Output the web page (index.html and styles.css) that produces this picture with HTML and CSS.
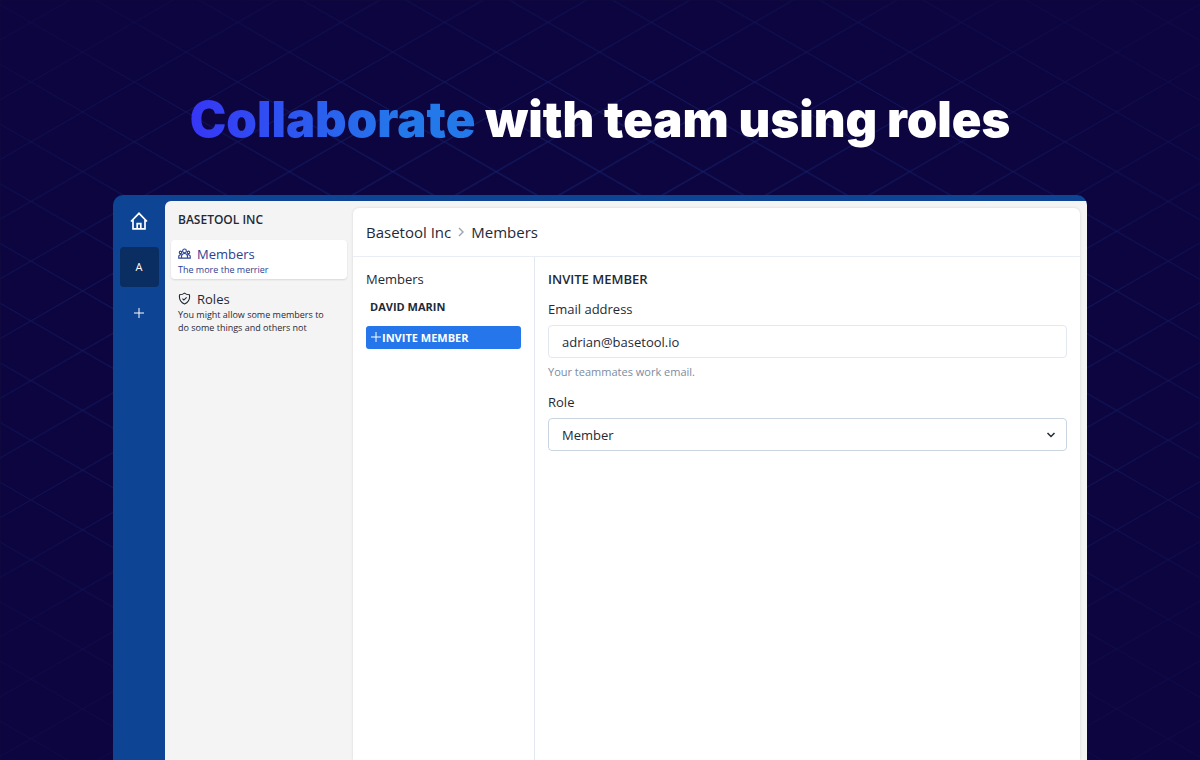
FILE: index.html
```html
<!DOCTYPE html>
<html lang="en">
  <head>
    <meta charset="utf-8">
    <meta name="viewport" content="width=device-width, initial-scale=1.0">
    <title>Basetool | Collaborate with team using roles</title>
    <link rel="stylesheet" href="styles.css">
  </head>

  <body>
    <!-- background grid, fades out from the center -->
    <svg class="grid" viewBox="0 0 1200 760" preserveAspectRatio="xMidYMid slice" aria-hidden="true">
      <defs>
        <pattern id="diamonds" x="30.9" y="22.4" width="103.4" height="59.7" patternUnits="userSpaceOnUse">
          <path d="M0 0L103.4 59.7M0 59.7L103.4 0" fill="none" stroke="#17338a" stroke-width="1"/>
        </pattern>
        <radialGradient id="fade" gradientUnits="userSpaceOnUse" cx="0" cy="0" r="1" gradientTransform="translate(600 350) scale(780 420)">
          <stop offset="0" stop-color="#fff" stop-opacity="0.8"/>
          <stop offset="0.4" stop-color="#fff" stop-opacity="0.65"/>
          <stop offset="0.7" stop-color="#fff" stop-opacity="0.4"/>
          <stop offset="1" stop-color="#fff" stop-opacity="0.16"/>
        </radialGradient>
        <mask id="glow"><rect width="1200" height="760" fill="url(#fade)"/></mask>
      </defs>
      <rect width="1200" height="760" fill="url(#diamonds)" mask="url(#glow)"/>
    </svg>

    <main class="hero">
      <h1><span>Collaborate</span> with team using roles</h1>

      <div class="app">
        <nav class="rail">
          <a href="#" class="rail-link" aria-label="Home">
            <svg class="home-icon" viewBox="0 0 20 20"><path d="M2 10.500L10 2.300l8 8.200M4 8.600v9.200h12V8.600M8.200 17.500v-4.800h3.600v4.800"/></svg>
          </a>
          <a href="#" class="rail-link current">A</a>
          <a href="#" class="rail-link" aria-label="Add organization">
            <svg class="plus-icon" viewBox="0 0 12 12"><path d="M6 1v10M1 6h10"/></svg>
          </a>
        </nav>

        <div class="workspace">
          <aside class="sidebar">
            <h2>Basetool Inc</h2>
            <a href="#" class="side-item active">
              <span class="side-title">
                <svg viewBox="0 0 14 14"><circle cx="7" cy="4.2" r="2"/><circle cx="2.7" cy="5.8" r="1.3"/><circle cx="11.3" cy="5.8" r="1.3"/><path d="M3.8 12v-1.800a3.200 3.200 0 0 1 6.400 0V12zM3.800 12H.8v-1.700a2 2 0 0 1 3.200-1.600M10.200 12h3v-1.700a2 2 0 0 0-3.200-1.600"/></svg>
                Members
              </span>
              <span class="side-text">The more the merrier</span>
            </a>
            <a href="#" class="side-item">
              <span class="side-title">
                <svg viewBox="0 0 14 14"><path d="M7 1.200c1.400 1.200 3.200 1.800 5.300 1.800.7 4.400-.9 8.100-5.300 9.900C2.600 11.100 1 7.400 1.700 3 3.800 3 5.600 2.400 7 1.200zM4.800 7.200l1.500 1.500 3-3"/></svg>
                Roles
              </span>
              <span class="side-text">You might allow some members to do some things and others not</span>
            </a>
          </aside>

          <section class="panel">
            <header class="breadcrumbs">
              <a href="#">Basetool Inc</a>
              <svg viewBox="0 0 8 10"><path d="M2 1l4 4-4 4"/></svg>
              <span>Members</span>
            </header>
            <div class="columns">
              <div class="members">
                <h3>Members</h3>
                <a href="#" class="member">David Marin</a>
                <button type="button" class="invite">
                  <svg viewBox="0 0 12 12"><path d="M6 1v10M1 6h10"/></svg>Invite member
                </button>
              </div>
              <form class="invite-form">
                <h3>Invite member</h3>
                <label for="email">Email address</label>
                <input type="email" id="email" value="adrian@basetool.io">
                <p class="help">Your teammates work email.</p>
                <label for="role">Role</label>
                <div class="select">
                  <select id="role">
                    <option>Member</option>
                  </select>
                  <svg viewBox="0 0 10 10"><path d="M1.500 3L5 6.500 8.500 3"/></svg>
                </div>
              </form>
            </div>
          </section>
        </div>
      </div>
    </main>
  </body>
</html>
```
FILE: styles.css
```css
* {
margin: 0;
padding: 0;
box-sizing: border-box;
}

body {
background: #0d053f;
color: #1f2937;
font-family: "Open Sans", "Noto Sans", sans-serif;
font-size: 13px;
line-height: 16px;
}

a {
color: inherit;
text-decoration: none;
}

svg {
fill: none;
stroke: currentColor;
flex: none;
}

.grid {
position: fixed;
inset: 0;
width: 100%;
height: 100%;
}

.hero {
position: relative;
display: flex;
flex-direction: column;
height: 100vh;
padding: 90px 113px 0;
overflow: hidden;
}

h1 {
color: #fff;
font-family: Inter, sans-serif;
font-size: 49px;
font-weight: 900;
line-height: 60px;
text-align: center;
white-space: nowrap;
}

h1 span {
background: linear-gradient(90deg, #3636f6, #2479ea 75%);
background-clip: text;
-webkit-background-clip: text;
color: transparent;
}

/* app window */
.app {
display: flex;
flex: 1;
margin-top: 45px;
padding-top: 6px;
border-radius: 10px 10px 0 0;
background: #0d4494;
overflow: hidden;
}

.rail {
display: flex;
flex-direction: column;
align-items: center;
gap: 6px;
width: 52px;
}

.rail-link {
display: flex;
align-items: center;
justify-content: center;
width: 39px;
height: 40px;
border-radius: 4px;
color: #fff;
font-size: 11px;
}

.rail-link.current {
background: #0a2d62;
}

.home-icon {
width: 20px;
height: 20px;
stroke-width: 1.7;
}

.plus-icon {
width: 12px;
height: 12px;
}

.workspace {
display: flex;
flex: 1;
min-width: 0;
border-radius: 6px 0 0 0;
background: #f4f4f4;
}

.sidebar {
width: 188px;
padding: 10px 6px;
}

.sidebar h2 {
padding: 0 7px;
font-size: 12px;
font-weight: 600;
line-height: 18px;
text-transform: uppercase;
}

.side-item {
display: block;
margin-top: 11px;
padding: 4px 12px 3px 7px;
border-radius: 4px;
}

.side-item + .side-item {
margin-top: 6px;
}

.side-item.active {
background: #fff;
color: #2c4293;
box-shadow: 0 1px 2px rgba(0, 0, 0, 0.12);
}

.side-title {
display: flex;
align-items: center;
gap: 6px;
height: 19px;
line-height: 18px;
}

.side-title svg {
width: 13px;
height: 13px;
stroke-width: 1.2;
}

.side-text {
display: block;
font-size: 9px;
line-height: 13px;
}

/* main panel */
.panel {
display: flex;
flex: 1;
flex-direction: column;
min-width: 0;
margin: 7px 7px 0 0;
border-radius: 6px 6px 0 0;
background: #fff;
box-shadow: 0 0 3px rgba(0, 0, 0, 0.12);
}

.breadcrumbs {
display: flex;
align-items: center;
gap: 6px;
height: 49px;
padding: 0 13px;
border-bottom: 1px solid #e9eef5;
font-size: 15px;
}

.breadcrumbs svg {
width: 8px;
height: 10px;
color: #9ca3af;
stroke-width: 1.4;
}

.columns {
display: flex;
flex: 1;
}

.members {
width: 182px;
padding: 14px 13px;
border-right: 1px solid #e2e8f0;
}

.members h3 {
font-size: 13px;
font-weight: 400;
}

.member {
display: block;
margin: 12px 0 11px;
padding: 0 4px;
font-size: 11px;
font-weight: 700;
text-transform: uppercase;
}

.invite {
display: flex;
align-items: center;
width: 100%;
height: 23px;
padding: 0 4px 1px;
border: 0;
border-radius: 3px;
background: #2476ea;
color: #fff;
font: 700 11px "Open Sans", sans-serif;
text-transform: uppercase;
cursor: pointer;
}

.invite svg {
width: 12px;
height: 12px;
}

.invite-form {
flex: 1;
padding: 14px 13px;
}

.invite-form h3 {
margin-bottom: 14px;
font-size: 13px;
font-weight: 600;
text-transform: uppercase;
}

.invite-form label {
display: block;
margin-bottom: 8px;
}

.invite-form input,
.invite-form select {
display: block;
width: 100%;
height: 33px;
padding: 0 13px;
border: 1px solid #e2e8f0;
border-radius: 4px;
background: #fff;
color: #1f2937;
font: 13px "Open Sans", sans-serif;
}

.invite-form select {
border-color: #cbd5e1;
appearance: none;
}

.help {
margin: 6px 0 14px;
color: #7c8ba1;
font-size: 11px;
}

.select {
position: relative;
}

.select svg {
position: absolute;
top: 12px;
right: 11px;
width: 10px;
height: 10px;
stroke-width: 1.5;
pointer-events: none;
}
```
